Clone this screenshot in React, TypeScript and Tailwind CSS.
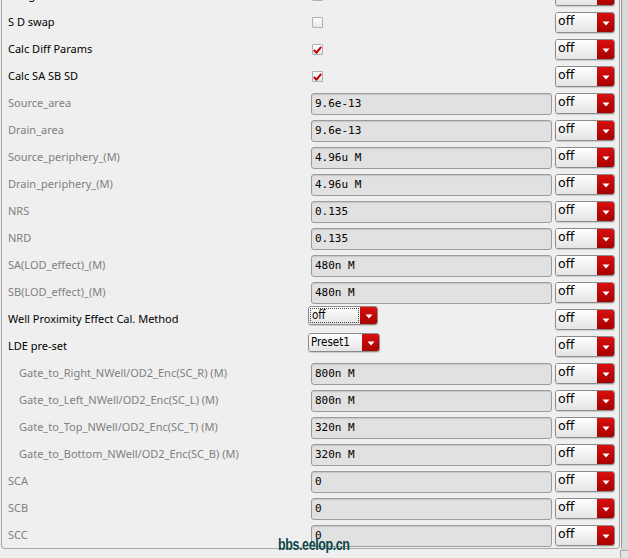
import React from 'react';

type Row =
  | { kind: 'check'; label: string; checked: boolean }
  | { kind: 'field'; label: string; value: string; indent?: boolean }
  | { kind: 'select'; label: string; value: string; w: string; focus?: boolean };

const rows: Row[] = [
  { kind: 'check', label: 'Merge diffusion', checked: false },
  { kind: 'check', label: 'S D swap', checked: false },
  { kind: 'check', label: 'Calc Diff Params', checked: true },
  { kind: 'check', label: 'Calc SA SB SD', checked: true },
  { kind: 'field', label: 'Source_area', value: '9.6e-13' },
  { kind: 'field', label: 'Drain_area', value: '9.6e-13' },
  { kind: 'field', label: 'Source_periphery_(M)', value: '4.96u M' },
  { kind: 'field', label: 'Drain_periphery_(M)', value: '4.96u M' },
  { kind: 'field', label: 'NRS', value: '0.135' },
  { kind: 'field', label: 'NRD', value: '0.135' },
  { kind: 'field', label: 'SA(LOD_effect)_(M)', value: '480n M' },
  { kind: 'field', label: 'SB(LOD_effect)_(M)', value: '480n M' },
  { kind: 'select', label: 'Well Proximity Effect Cal. Method', value: 'off', w: 'w-[70px]', focus: true },
  { kind: 'select', label: 'LDE pre-set', value: 'Preset1', w: 'w-[72px]' },
  { kind: 'field', label: 'Gate_to_Right_NWell/OD2_Enc(SC_R) (M)', value: '800n M', indent: true },
  { kind: 'field', label: 'Gate_to_Left_NWell/OD2_Enc(SC_L) (M)', value: '800n M', indent: true },
  { kind: 'field', label: 'Gate_to_Top_NWell/OD2_Enc(SC_T) (M)', value: '320n M', indent: true },
  { kind: 'field', label: 'Gate_to_Bottom_NWell/OD2_Enc(SC_B) (M)', value: '320n M', indent: true },
  { kind: 'field', label: 'SCA', value: '0' },
  { kind: 'field', label: 'SCB', value: '0' },
  { kind: 'field', label: 'SCC', value: '0' },
];

function Arrow() {
  return (
    <svg width="8" height="5" viewBox="0 0 8 5" className="mt-[2px]">
      <path d="M0.5 0.5 L7.5 0.5 L4 4.5 Z" fill="#ffffff" />
    </svg>
  );
}

function Combo({ value, w, h, focus, big }: { value: string; w: string; h: string; focus?: boolean; big?: boolean }) {
  return (
    <div className={`${w} ${h} flex rounded-[3px] border border-[#8c8c8c] overflow-hidden shadow-[0_1px_1px_rgba(0,0,0,0.15)]`}>
      <div className="flex-1 bg-gradient-to-b from-white to-[#e4e4e4] flex items-center p-[1px]">
        <div
          className={`h-full w-full flex items-center pl-[1px] text-black leading-none ${
            big ? 'text-[12.5px] pb-[2px]' : 'text-[11.5px]'
          } ${focus ? 'border border-dotted border-[#444]' : ''}`}
          style={{
            fontFamily: big
              ? '"DejaVu Sans", sans-serif'
              : '"DejaVu Sans Condensed", "DejaVu Sans", sans-serif',
          }}
        >
          {value}
        </div>
      </div>
      <div className="w-[17px] bg-gradient-to-b from-[#d81010] to-[#a80000] flex items-center justify-center">
        <Arrow />
      </div>
    </div>
  );
}

function Check({ checked }: { checked: boolean }) {
  return (
    <div className="ml-[4px] w-[11px] h-[11px] border border-[#b0b0b0] rounded-[1px] bg-gradient-to-b from-white to-[#e6e6e6] flex items-center justify-center">
      {checked && (
        <svg width="9" height="8" viewBox="0 0 9 8">
          <path d="M0.8 4 L3.5 6.6 L8.2 0.8" fill="none" stroke="#c40000" strokeWidth="2" />
        </svg>
      )}
    </div>
  );
}

function Field({ value }: { value: string }) {
  return (
    <div
      className="ml-[3px] w-[241px] h-[22px] rounded-[3px] border border-[#9c9c9c] bg-[#e1e1e1] shadow-[inset_0_1px_1px_rgba(0,0,0,0.12)] flex items-center pl-[3px] pt-[2px] text-[11px] text-black"
      style={{ fontFamily: '"DejaVu Sans Mono", monospace' }}
    >
      {value}
    </div>
  );
}

export default function App() {
  return (
    <div className="w-[628px] h-[558px] bg-[#efefef] overflow-hidden relative flex" style={{ fontFamily: '"Noto Sans", sans-serif' }}>
      <div className="w-[619px] h-[549px] ml-[1px] border-l border-r border-b border-[#a8a8a8] rounded-b-[4px] overflow-hidden">
        <div className="-mt-[18px] pl-[6px]">
          {rows.map((r, i) => {
            const dark = r.kind !== 'field';
            return (
              <div key={i} className="h-[27px] flex items-center">
                <div
                  className={`w-[300px] text-[11px] ${dark ? 'text-black' : 'text-[#808080]'} ${
                    r.kind === 'field' && r.indent ? 'pl-[11px]' : ''
                  }`}
                >
                  {r.label}
                </div>
                <div className="w-[247px] flex items-center">
                  {r.kind === 'check' && <Check checked={r.checked} />}
                  {r.kind === 'field' && <Field value={r.value} />}
                  {r.kind === 'select' && (
                    <div className="mb-[8px]">
                      <Combo value={r.value} w={r.w} h="h-[19px]" focus={r.focus} />
                    </div>
                  )}
                </div>
                <Combo value="off" w="w-[60px]" h="h-[21px]" big />
              </div>
            );
          })}
        </div>
      </div>
      <div className="w-[8px] h-full flex flex-col">
        <div className="flex-1 ml-[1px] border-l border-[#9a9a9a] bg-[#d9d9d9] rounded-bl-[3px]" />
        <div className="h-[8px] bg-[#e4e4e4] border-l border-t border-[#a8a8a8]" />
      </div>
      <div
        className="absolute left-[278px] top-[537px] text-[16px] font-bold text-[#0b4848] tracking-[-0.5px] scale-x-[0.78] origin-left leading-none"
        style={{ fontFamily: '"Liberation Sans", sans-serif' }}
      >
        bbs.eelop.cn
      </div>
    </div>
  );
}
